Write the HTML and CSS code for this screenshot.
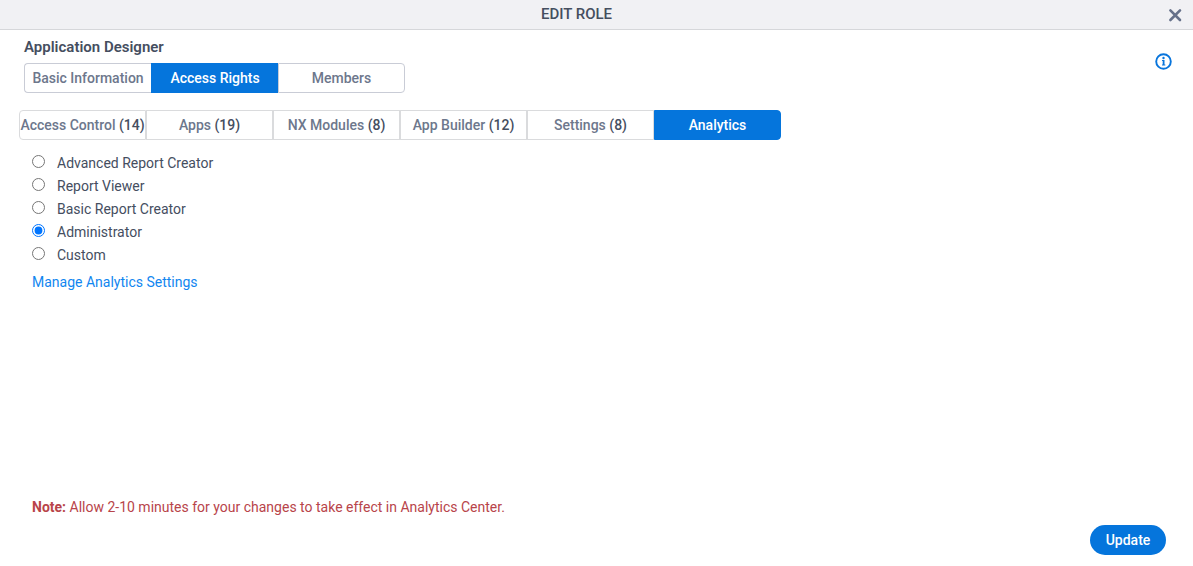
FILE: index.html
```html
<!DOCTYPE html>
<html lang="en">
<head>
<meta charset="utf-8">
<title>Edit Role</title>
<link rel="stylesheet" href="styles.css">
</head>
<body>
<header class="titlebar">
  <h1 class="titlebar-text">EDIT ROLE</h1>
  <button class="icon-button close" type="button" aria-label="Close">
    <svg width="14" height="14" viewBox="0 0 14 14" aria-hidden="true"><path d="M2.4 2.4l9.6 9.6M12 2.4L2.4 12" fill="none" stroke="#66718a" stroke-width="2.6" stroke-linecap="round"/></svg>
  </button>
</header>
<main class="content">
  <div class="role-head">
    <div>
      <h2 class="role-name">Application Designer</h2>
      <nav class="tabs" aria-label="Role sections">
        <button class="tab" type="button">Basic Information</button>
        <button class="tab active" type="button">Access Rights</button>
        <button class="tab" type="button">Members</button>
      </nav>
    </div>
    <button class="icon-button info" type="button" aria-label="Information">
      <svg width="17" height="17" viewBox="0 0 17 17" aria-hidden="true"><circle cx="8.5" cy="8.5" r="7.3" fill="none" stroke="#0875dc" stroke-width="1.9"/><circle cx="8.5" cy="5" r="1.2" fill="#0875dc"/><path d="M7 7h2.5v4.6h.8v1H7v-1h.7V8H7z" fill="#0875dc"/></svg>
    </button>
  </div>
  <nav class="tabs subtabs" aria-label="Access rights">
    <button class="tab" type="button">Access Control&nbsp;<span class="count">(14)</span></button>
    <button class="tab" type="button">Apps&nbsp;<span class="count">(19)</span></button>
    <button class="tab" type="button">NX Modules&nbsp;<span class="count">(8)</span></button>
    <button class="tab" type="button">App Builder&nbsp;<span class="count">(12)</span></button>
    <button class="tab" type="button">Settings&nbsp;<span class="count">(8)</span></button>
    <button class="tab active" type="button">Analytics</button>
  </nav>
  <form class="panel">
    <div class="options">
      <label class="option"><input class="radio" type="radio" name="level">Advanced Report Creator</label>
      <label class="option"><input class="radio" type="radio" name="level">Report Viewer</label>
      <label class="option"><input class="radio" type="radio" name="level">Basic Report Creator</label>
      <label class="option"><input class="radio" type="radio" name="level" checked>Administrator</label>
      <label class="option"><input class="radio" type="radio" name="level">Custom</label>
    </div>
    <a class="link" href="#">Manage Analytics Settings</a>
    <p class="note"><strong>Note:</strong> Allow 2-10 minutes for your changes to take effect in Analytics Center.</p>
    <button class="update" type="button">Update</button>
  </form>
</main>
</body>
</html>
```
FILE: styles.css
```css
* {
  box-sizing: border-box;
}

body {
  display: flex;
  flex-direction: column;
  min-height: 100vh;
  margin: 0;
  background: #fff;
  color: #454e5f;
  font: 14px/20px Roboto, "Liberation Sans", sans-serif;
}

button {
  font: inherit;
  cursor: pointer;
}

h1,
h2,
p {
  margin: 0;
}

.titlebar {
  display: flex;
  align-items: center;
  height: 30px;
  background: #f1f1f4;
  border-bottom: 1px solid #d6d7da;
}

.titlebar-text {
  flex: 1;
  padding: 0 4px 2px 0;
  text-align: center;
  font-size: 15px;
  font-weight: 500;
}

.icon-button {
  display: flex;
  align-items: center;
  justify-content: center;
  padding: 0;
  border: 0;
  background: none;
}

.close {
  width: 36px;
  height: 29px;
}

.content {
  display: flex;
  flex: 1;
  flex-direction: column;
}

.role-head {
  display: flex;
  justify-content: space-between;
  padding: 7px 21px 0 24px;
}

.role-name {
  margin-bottom: 6px;
  font-size: 15px;
  font-weight: 600;
}

.info {
  align-self: flex-start;
  margin-top: 16px;
}

.tabs {
  display: flex;
}

.tab {
  display: flex;
  align-items: center;
  justify-content: center;
  width: 127px;
  height: 30px;
  padding: 0;
  border: 1px solid #c9ccd6;
  border-right-width: 0;
  background: #fff;
  color: #6d778c;
  font-weight: 500;
  white-space: nowrap;
}

.tab:first-child {
  border-radius: 4px 0 0 4px;
}

.tab:last-child {
  border-right-width: 1px;
  border-radius: 0 4px 4px 0;
}

.subtabs {
  margin: 17px 19px 0;
}

.subtabs .tab {
  border-color: #dadbdd;
  border-right-width: 1px;
}

.tabs .tab.active {
  border-color: #0575dc;
  background: #0575dc;
  color: #fff;
}

.count {
  color: #454e5f;
}

.panel {
  display: flex;
  flex: 1;
  flex-direction: column;
  align-items: flex-start;
  padding: 13px 27px 11px 32px;
}

.options {
  display: grid;
  gap: 3px;
}

.option {
  display: flex;
  align-items: flex-start;
  gap: 12px;
}

.radio {
  width: 13px;
  height: 13px;
  margin: 2px 0 0;
}

.link {
  margin-top: 7px;
  color: #1186f0;
  text-decoration: none;
}

.note {
  margin-top: auto;
  color: #b8444a;
}

.note strong {
  font-weight: 700;
}

.update {
  align-self: flex-end;
  width: 76px;
  height: 30px;
  margin-top: 8px;
  padding: 0;
  border: 0;
  border-radius: 15px;
  background: #0575dc;
  color: #fff;
  font-weight: 500;
}
```
